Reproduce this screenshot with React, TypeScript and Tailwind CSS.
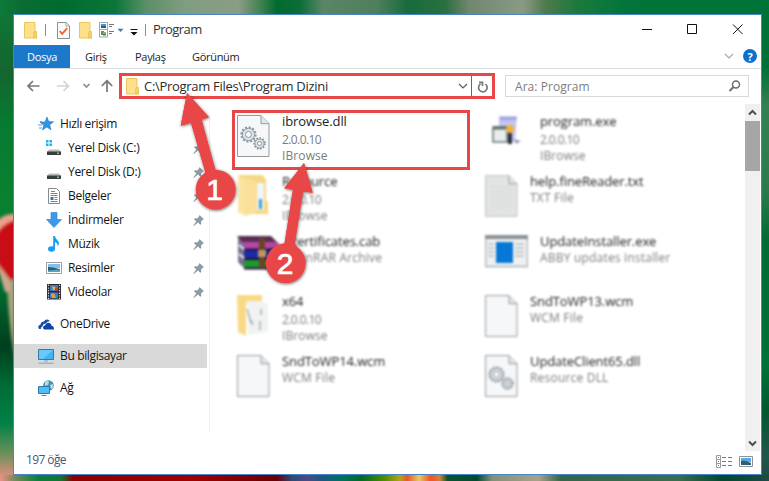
import type { ReactNode } from 'react';

const RED = '#e94747';

function Wallpaper() {
  return (
    <svg className="absolute inset-0" width="769" height="481" viewBox="0 0 769 481">
      <defs>
        <linearGradient id="top" x1="0" x2="769" y1="0" y2="0" gradientUnits="userSpaceOnUse">
          <stop offset="0" stopColor="#0d7a38" />
          <stop offset=".03" stopColor="#0a6c33" />
          <stop offset=".08" stopColor="#006b2e" />
          <stop offset=".15" stopColor="#0b7638" />
          <stop offset=".19" stopColor="#5b8f67" />
          <stop offset=".24" stopColor="#7f9d80" />
          <stop offset=".31" stopColor="#8a9d86" />
          <stop offset=".34" stopColor="#3f8050" />
          <stop offset=".36" stopColor="#006b30" />
          <stop offset=".39" stopColor="#0c6d37" />
          <stop offset=".42" stopColor="#5a8566" />
          <stop offset=".49" stopColor="#4f7f5d" />
          <stop offset=".53" stopColor="#176b3c" />
          <stop offset=".58" stopColor="#2c7040" />
          <stop offset=".61" stopColor="#71876f" />
          <stop offset=".68" stopColor="#8a9a84" />
          <stop offset=".71" stopColor="#4e7a4c" />
          <stop offset=".75" stopColor="#1a7a3c" />
          <stop offset=".82" stopColor="#00743a" />
          <stop offset="1" stopColor="#007338" />
        </linearGradient>
        <linearGradient id="right" x1="0" x2="0" y1="0" y2="481" gradientUnits="userSpaceOnUse">
          <stop offset="0" stopColor="#007338" />
          <stop offset=".14" stopColor="#007036" />
          <stop offset=".22" stopColor="#348055" />
          <stop offset=".4" stopColor="#2b7a4c" />
          <stop offset=".5" stopColor="#006b34" />
          <stop offset=".76" stopColor="#007236" />
          <stop offset=".85" stopColor="#00592f" />
          <stop offset=".95" stopColor="#21564a" />
          <stop offset="1" stopColor="#1f4a44" />
        </linearGradient>
        <linearGradient id="left" x1="0" x2="0" y1="0" y2="481" gradientUnits="userSpaceOnUse">
          <stop offset="0" stopColor="#0d7a38" />
          <stop offset=".15" stopColor="#14652f" />
          <stop offset=".25" stopColor="#077a31" />
          <stop offset=".42" stopColor="#0a8130" />
          <stop offset=".6" stopColor="#006b30" />
          <stop offset=".72" stopColor="#003f1e" />
          <stop offset=".8" stopColor="#006b35" />
          <stop offset=".88" stopColor="#008247" />
          <stop offset=".94" stopColor="#668f5a" />
          <stop offset="1" stopColor="#f08f83" />
        </linearGradient>
        <linearGradient id="bottom" x1="0" x2="769" y1="0" y2="0" gradientUnits="userSpaceOnUse">
          <stop offset="0" stopColor="#ee8f86" />
          <stop offset=".02" stopColor="#6f8c55" />
          <stop offset=".05" stopColor="#08803f" />
          <stop offset=".08" stopColor="#147237" />
          <stop offset=".095" stopColor="#8b0000" />
          <stop offset=".25" stopColor="#a00000" />
          <stop offset=".36" stopColor="#660008" />
          <stop offset=".38" stopColor="#2f4a76" />
          <stop offset=".4" stopColor="#4d4a85" />
          <stop offset=".42" stopColor="#175a80" />
          <stop offset=".445" stopColor="#007060" />
          <stop offset=".47" stopColor="#006a27" />
          <stop offset=".5" stopColor="#4d8d00" />
          <stop offset=".52" stopColor="#b1a516" />
          <stop offset=".53" stopColor="#ed5724" />
          <stop offset=".545" stopColor="#e2cc62" />
          <stop offset=".56" stopColor="#f35125" />
          <stop offset=".572" stopColor="#d18230" />
          <stop offset=".582" stopColor="#075432" />
          <stop offset=".62" stopColor="#004a34" />
          <stop offset=".64" stopColor="#83917a" />
          <stop offset=".7" stopColor="#a6a28a" />
          <stop offset=".73" stopColor="#32664a" />
          <stop offset=".88" stopColor="#386f50" />
          <stop offset=".94" stopColor="#004832" />
          <stop offset="1" stopColor="#1f4a44" />
        </linearGradient>
        <filter id="soft"><feGaussianBlur stdDeviation="1.5" /></filter>
      </defs>
      <rect width="769" height="481" fill="url(#left)" />
      <g filter="url(#soft)">
        <path d="M6 270h9v90q-6-30-9-90z" fill="#a9a27a" />
        <path d="M-4 228Q4 217 18 216v62l-9 3-13-10z" fill="#c90a12" />
        <path d="M-4 262l8 10 6 8v12H5z" fill="#c9a990" />
        <path d="M-4 222q8-9 19-8v6Q5 222-4 234z" fill="#e9a08a" />
      </g>
      <rect width="769" height="15" fill="url(#top)" />
      <rect x="755" width="14" height="481" fill="url(#right)" />
      <rect y="475" width="769" height="6" fill="url(#bottom)" />
    </svg>
  );
}

function Folder() {
  return (
    <svg width="13" height="17" viewBox="0 0 13 17" className="shrink-0">
      <path d="M.5.5h10.500v12h1.500v3.500H.5z" fill="#fde08a" stroke="#ecc65c" />
      <path d="M9.6 10.5q0-1 1-1h1.9V16H9.6z" fill="#f6d069" stroke="#e8bd4b" strokeWidth=".7" />
    </svg>
  );
}

function TitleBar() {
  return (
    <div className="flex h-[30px] shrink-0 items-center">
      <div className="ml-[10px] w-[13px]"><Folder /></div>
      <i className="ml-2 h-3 w-px bg-[#8c8c8c]" />
      <svg className="ml-[11px]" width="13" height="17" viewBox="0 0 13 17">
        <path d="M.5.5h8.6l3.4 3.4v12.6H.5z" fill="#fafafa" stroke="#8b8f92" />
        <path d="M8.9.6v3.5h3.5" fill="none" stroke="#a9adb0" />
        <path d="M2.700 9l2.500 2.800 5-5.600" fill="none" stroke="#e9632b" strokeWidth="1.800" />
      </svg>
      <div className="ml-[9px] w-[13px]"><Folder /></div>
      <svg className="ml-[7px]" width="16" height="16" viewBox="0 0 16 16">
        <path d="M.5.500h8v14.500h-8zM.5 7.500h8" fill="#fff" stroke="#a2a7ab" />
        <path d="M2 2h5v2H2z" fill="#3c95e8" /><path d="M2 4h5v2H2z" fill="#2e5d66" />
        <path d="M2 9h3v4H2z" fill="#469a55" /><path d="M4 10h3v2H4z" fill="#e98f3a" /><path d="M4 12h3v1.500H4z" fill="#376fc4" />
        <path d="M10 2.500h5M10 4.500h3M10 9.500h5M10 11.500h3" stroke="#77797b" />
      </svg>
      <svg className="ml-[2px]" width="7" height="5" viewBox="0 0 7 5"><path d="M.5.800h6L3.500 4z" fill="#3f75c1" /></svg>
      <svg className="ml-[6px] mt-[4px]" width="8" height="8" viewBox="0 0 8 8"><path d="M.5 1.500h7" stroke="#111" /><path d="M.5 4h7L4 7.500z" fill="#111" /></svg>
      <i className="ml-[7px] h-3 w-px bg-[#8c8c8c]" />
      <span className="ml-[7px] w-[60px] text-[13px] tracking-[-0.55px] text-[#333]">Program</span>
      <svg className="ml-auto mr-[17px]" width="103" height="12" viewBox="0 0 103 12" fill="none" stroke="#111">
        <path d="M1 5.500h10M46.500.500h9v9h-9zM92 .500l9.500 9.500M101.500.500L92 10" />
      </svg>
    </div>
  );
}

function Ribbon() {
  return (
    <div className="flex h-[24px] shrink-0 border-b border-[#d9dadb] text-[11px] leading-[23px] tracking-[-0.3px] text-[#222]">
      <span className="w-[56px] bg-[#1b78cb] text-center text-white">Dosya</span>
      <span className="ml-[15px] w-[50px]">Giriş</span>
      <span className="w-[57px]">Paylaş</span>
      <span>Görünüm</span>
      <svg className="ml-auto mt-[8px]" width="10" height="7" viewBox="0 0 10 7"><path d="M1 1l4 4 4-4" fill="none" stroke="#a7a7a7" strokeWidth="1.200" /></svg>
      <div className="ml-[9px] mr-[4px] mt-[4px] flex h-[14px] w-[14px] items-center justify-center rounded-full bg-[#0d70cf] text-[11px] font-bold leading-none text-white">?</div>
    </div>
  );
}

function AddressRow() {
  return (
    <div className="flex h-[34px] shrink-0 pt-[4px]">
      <svg className="mt-[5px] shrink-0" width="105" height="16" viewBox="0 0 105 16" fill="none" stroke="#777" strokeWidth="1.700">
        <path d="M25.500 8H14M19 3l-5 5 5 5" />
        <path d="M43 8h11.500M49.500 3l5 5-5 5" stroke="#d4d4d4" />
        <path d="M69.500 6l3 3 3-3" stroke="#8b8b8b" />
        <path d="M93 14V3M87.800 8L93 2.800 98.200 8" />
      </svg>
      <div className="flex h-[26px] w-[376px] shrink-0 items-center border-[3px] border-[#e94747]">
        <div className="ml-[4px] w-[13px]"><Folder /></div>
        <span className="ml-[5px] mt-px flex-1 whitespace-nowrap text-[13px] tracking-[-0.3px] text-[#2b2b2b]">C:\Program Files\Program Dizini</span>
        <svg className="mt-px" width="10" height="7" viewBox="0 0 10 7"><path d="M1 1l4 4 4-4" fill="none" stroke="#5d5d5d" strokeWidth="1.200" /></svg>
        <i className="ml-[3px] h-full w-px bg-[#2179c4]" />
        <svg className="ml-[5px] mr-[3px] mt-px" width="12" height="12" viewBox="0 0 12 12" fill="none" stroke="#777" strokeWidth="1.700">
          <path d="M3.500 2.900A4.300 4.300 0 1 0 8.500 3.100M2 1.300h3.500v3.700" />
        </svg>
      </div>
      <div className="ml-[10px] mt-[2px] flex h-[22px] w-[244px] shrink-0 items-center border border-[#d9d9d9]">
        <span className="ml-[9px] mt-px text-[12px] tracking-[0.05px] text-[#7d7d7d]">Ara: Program</span>
        <svg className="ml-auto mr-[7px]" width="13" height="12" viewBox="0 0 13 12" fill="none" stroke="#6c6c6c">
          <circle cx="8" cy="4.500" r="3.500" strokeWidth="1.500" /><path d="M5.500 7L1.500 11" strokeWidth="2" />
        </svg>
      </div>
    </div>
  );
}

const drive = (
  <>
    <path d="M3 9.500h10l2 2.500H1z" fill="#b9bcbe" />
    <path d="M1 11.500h14V15H1z" fill="#3a3d3f" /><path d="M11 12.500h2V14h-2z" fill="#56e04e" />
  </>
);

const navIcons: Record<string, ReactNode> = {
  star: (
    <>
      <path d="M9 1l1.700 4.600 4.800.200-3.800 3 1.300 5-4.300-2.800L4.500 14l1.300-4.800L2 6.200l5-.200z" fill="#2f94e3" stroke="#1c7bc9" strokeWidth=".6" />
      <path d="M0 9h4M1 12h3M2 5.500h2" stroke="#4fa5e6" />
    </>
  ),
  win: (
    <>
      <path d="M0 0h2.500v2.500H0zM3.500 0H6v2.500H3.500zM0 3.500h2.500V6H0zM3.500 3.500H6V6H3.500z" fill="#19b1ee" />
      {drive}
    </>
  ),
  disk: drive,
  doc: (
    <>
      <path d="M2.500.500h8l3 3v12h-11z" fill="#fff" stroke="#84898d" />
      <path d="M5 3.500h4M4.500 5.500h7M4.500 7.500h7M8.500 9.500h3M8.500 11.500h3M4.500 13.500h7" stroke="#4b8fc7" /><path d="M4.500 9h3v3h-3z" fill="#2a76b8" />
    </>
  ),
  down: <path d="M5 .500h6v7h4.500L8 15.500.500 7.500H5z" fill="#3c98e8" stroke="#2a80cc" strokeWidth=".6" />,
  music: (
    <>
      <ellipse cx="5.500" cy="13" rx="3.500" ry="2.800" fill="#169cf0" />
      <path d="M7.200 0H9q.3 2.500 2.400 4.200Q14.500 7 11.500 10.500q.6-3.500-2.500-4.500v7H7.200z" fill="#169cf0" />
    </>
  ),
  pic: (
    <>
      <path d="M.5 2.500h15v11H.5z" fill="#fff" stroke="#9b9fa2" />
      <path d="M2 4h12v4H2z" fill="#83bfee" /><path d="M2 7q4 0 12 2v3H2z" fill="#2e5f6d" /><path d="M2 10.500l12-1V12H2z" fill="#5b9fcb" />
    </>
  ),
  film: (
    <>
      <path d="M1 0h14v15.500H1z" fill="#2b2b2b" /><path d="M4 1h8v6H4zM4 8.500h8v6H4z" fill="#3e79cf" />
      <path d="M6 2l3 1 2 3H7z" fill="#e8b429" /><path d="M5 10l3-1 2 5H6z" fill="#d8a52d" /><path d="M9 4h3v3H9z" fill="#b5443b" />
      <path d="M2.500.800V15M13.500.800V15" stroke="#ddd" strokeWidth="1.200" strokeDasharray="1.300 1.300" />
    </>
  ),
  cloud: (
    <>
      <path d="M1 13Q-1 9.500 2.500 8.500 3 5.500 6 5.500 8 2 12 5 9 5 8 7.500q-3 0-3.500 3Q2.500 11 3 13z" fill="#1650a8" />
      <path d="M6 13.500q-2.500-2.500 1-4.200Q8.500 6 11.500 7q2 .500 2 2.800Q16 10 16 13.500z" fill="#0c46a5" />
    </>
  ),
  pc: (
    <>
      <path d="M.5 1.500h15v10H.5z" fill="#40b4f5" stroke="#3478a8" /><path d="M1 2h14L5 11H1z" fill="#69c8fb" />
      <path d="M6 13h4" stroke="#7fa3bb" /><path d="M.500 15.200h15" stroke="#6faacd" />
    </>
  ),
  net: (
    <>
      <circle cx="10.500" cy="5.500" r="5.300" fill="#4b8fae" /><path d="M7 2q3-2 4 0l-1 3-3 1zM12 5l3-1v4l-2 1z" fill="#b8dbe6" />
      <path d="M.5 6.500h11v7H.5z" fill="#50bdf8" stroke="#2c78ac" /><path d="M3.500 15.500h5" stroke="#4a8eb8" />
    </>
  ),
};

function NavRow({ icon, label, child, pin, active }: { icon: string; label: string; child?: boolean; pin?: boolean; active?: boolean }) {
  return (
    <div className={`flex h-6 w-[193px] shrink-0 items-center ${active ? 'bg-[#d9d9d9]' : ''} ${child ? 'pl-8' : 'pl-6'}`}>
      <svg width="16" height="16" viewBox="0 0 16 16" className="shrink-0">{navIcons[icon]}</svg>
      <span className={`whitespace-nowrap text-[12px] text-[#151515] ${child ? 'ml-[6px] tracking-[-0.3px]' : 'ml-[6px] tracking-[-0.35px]'}`}>{label}</span>
      {pin && (
        <svg className="ml-auto mr-[3px]" width="11" height="11" viewBox="0 0 11 11">
          <path d="M6.500 0L11 4.200 9.700 4.700 8 6.800l.300 2.200-1 .8-2.300-2.200L.8 11l-.500-.5 3-4L1 4.200l.9-1 2.300.200L6 1.600z" fill="#8e9ba4" />
        </svg>
      )}
    </div>
  );
}

function Sidebar() {
  return (
    <div className="flex w-[195px] shrink-0 flex-col pt-[9px]">
      <NavRow icon="star" label="Hızlı erişim" />
      <NavRow icon="win" label="Yerel Disk (C:)" child pin />
      <NavRow icon="disk" label="Yerel Disk (D:)" child pin />
      <NavRow icon="doc" label="Belgeler" child pin />
      <NavRow icon="down" label="İndirmeler" child pin />
      <NavRow icon="music" label="Müzik" child pin />
      <NavRow icon="pic" label="Resimler" child pin />
      <NavRow icon="film" label="Videolar" child pin />
      <div className="h-2 shrink-0" />
      <NavRow icon="cloud" label="OneDrive" />
      <div className="h-2 shrink-0" />
      <NavRow icon="pc" label="Bu bilgisayar" active />
      <div className="h-2 shrink-0" />
      <NavRow icon="net" label="Ağ" />
    </div>
  );
}

function Page({ gears, gray }: { gears?: boolean; gray?: boolean }) {
  return (
    <svg width="33" height="43" viewBox="0 0 33 43">
      <path d="M.5.500h23.500l8 8V41.500H.500z" fill={gray ? '#e2e3e3' : '#f5f7f9'} stroke={gray ? '#c2c4c5' : '#979b9e'} />
      <path d="M24 .700v8h8" fill="#e3e6e8" stroke="#979b9e" />
      {gray && <path d="M5 12h22M5 16h22M5 20h22M5 24h22M5 28h22M5 32h22" stroke="#d8dadb" />}
      {gears && (
        <g fill="#dde3e7" stroke="#8c989f">
          <circle cx="11.500" cy="19.500" r="7" strokeWidth="2.200" strokeDasharray="2 1.660" fill="none" />
          <circle cx="11.500" cy="19.500" r="6.200" /><circle cx="11.500" cy="19.500" r="3" fill="#f8fafb" />
          <circle cx="22.500" cy="28.500" r="5.300" strokeWidth="2" strokeDasharray="1.600 1.430" fill="none" />
          <circle cx="22.500" cy="28.500" r="4.600" /><circle cx="22.500" cy="28.500" r="2" fill="#f8fafb" />
        </g>
      )}
    </svg>
  );
}

const fileIcons: Record<string, ReactNode> = {
  dll: <Page gears />,
  page: <Page />,
  txt: <Page gray />,
  folder: (
    <svg width="33" height="43" viewBox="0 0 33 43">
      <path d="M1 0h24l4 4v35H4z" fill="#f6d783" /><path d="M1 0l8 5v36l-8-4z" fill="#fbe3a0" />
      <path d="M20 8h7v27h-7z" fill="#f1f6f8" /><path d="M22 24h3v10h-3z" fill="#3e9fd4" /><path d="M27 26h4v13h-4z" fill="#f7d77f" /><path d="M8 3l11 3v32l-11 3z" fill="#fae09a" />
    </svg>
  ),
  open: (
    <svg width="33" height="43" viewBox="0 0 33 43">
      <path d="M0 0h25v8H9v33l-8-4z" fill="#fad985" /><path d="M10 6h14l7 3v28l-20 3z" fill="#f1f2f2" />
      <path d="M10 14l4 14M14 25l2 5M24 14v6M23 26v9" stroke="#a2b2b8" strokeWidth="1.500" />
    </svg>
  ),
  rar: (
    <svg width="43" height="35" viewBox="0 0 43 35">
      <path d="M0 1h34l9 9H7z" fill="#5a2c54" /><path d="M5 7h36v8H7L1 4z" fill="#b547a7" />
      <path d="M5 15h37v9H8l-6-7z" fill="#1d2aa8" /><path d="M6 24h36v9H8l-6-5z" fill="#1c9a2e" />
      <path d="M1 2l6 8v23l-6-6z" fill="#7a6f94" /><path d="M2 10l6 5M2 19l6 5" stroke="#eee" strokeWidth="2" />
      <path d="M7 14.500h35M7 24h35M7 33.500h35" stroke="#22143a" strokeWidth="1.800" />
      <path d="M22 3h6v30h-6z" fill="#6b4328" /><path d="M21 15h8v7h-8z" fill="#b99b62" />
    </svg>
  ),
  setup: (
    <svg width="32" height="32" viewBox="0 0 32 32">
      <path d="M8 1h18l-2 26H8z" fill="#c5c6ee" /><path d="M9 2h17l-1 3H9z" fill="#a3a4e6" />
      <path d="M2 12h14v15H2z" fill="#e8ecea" stroke="#6b757b" strokeWidth="1.500" /><path d="M2 11.500h14v3H2z" fill="#5d7068" />
      <circle cx="19" cy="14" r="4" fill="#f2b13c" /><path d="M17 18h4v11h-4z" fill="#2c3340" /><path d="M23 24l7 2-5 3z" fill="#9a9cc0" />
    </svg>
  ),
  app: (
    <svg width="43" height="33" viewBox="0 0 43 33">
      <path d="M.5.500h42v31H.500z" fill="#eef0f1" stroke="#aeb2b5" strokeWidth="1.500" /><path d="M0 0h43v4H0z" fill="#8c9195" />
      <path d="M11 7h17v21H11z" fill="#0878d8" /><path d="M3 9h6M3 13h6M3 17h6M3 21h6M30 9h9M30 13h9M30 17h9M30 21h9" stroke="#b9bdc0" strokeWidth="1.500" />
    </svg>
  ),
};

type FileItem = { icon: string; name: string; lines: string[]; pad: string };

const files: FileItem[] = [
  { icon: 'dll', name: 'ibrowse.dll', lines: ['2.0.0.10', 'IBrowse'], pad: 'w-[45px]' },
  { icon: 'setup', name: 'program.exe', lines: ['2.0.0.10', 'IBrowse'], pad: 'w-[55px] pl-[6px]' },
  { icon: 'folder', name: 'Resource', lines: ['2.0.0.10', 'IBrowse'], pad: 'w-[45px]' },
  { icon: 'txt', name: 'help.fineReader.txt', lines: ['TXT File'], pad: 'w-[45px]' },
  { icon: 'rar', name: 'certificates.cab', lines: ['WinRAR Archive'], pad: 'w-[54px]' },
  { icon: 'app', name: 'UpdateInstaller.exe', lines: ['ABBY updates installer'], pad: 'w-[55px]' },
  { icon: 'open', name: 'x64', lines: ['2.0.0.10', 'IBrowse'], pad: 'w-[45px]' },
  { icon: 'page', name: 'SndToWP13.wcm', lines: ['WCM File'], pad: 'w-[45px]' },
  { icon: 'page', name: 'SndToWP14.wcm', lines: ['WCM File'], pad: 'w-[45px]' },
  { icon: 'dll', name: 'UpdateClient65.dll', lines: ['Resource DLL'], pad: 'w-[45px]' },
];

function FileTile({ item, selected }: { item: FileItem; selected: boolean }) {
  const wide = item.lines.length > 1;
  return (
    <div
      className={
        selected
          ? 'ml-[-5px] flex h-[60px] w-[238px] border-[3px] border-[#e94747] pl-[2px] pt-[2px]'
          : 'flex h-[60px] pt-[5px] blur-[1.3px]'
      }
    >
      <div className={`shrink-0 ${item.pad}`}>{fileIcons[item.icon]}</div>
      <div className="-mt-[2px] whitespace-nowrap text-[13px] leading-4 tracking-[-0.1px]">
        <div className="text-[#1d1d1d]">{item.name}</div>
        <div className={`text-[12px] text-[#7c7c7c] ${wide ? 'mt-[3px]' : 'mt-px'}`}>
          {item.lines.map((line) => (
            <div key={line} className={line === '2.0.0.10' ? 'tracking-[-0.6px]' : line === 'IBrowse' ? 'tracking-[0.1px]' : 'tracking-[0.2px]'}>{line}</div>
          ))}
        </div>
      </div>
    </div>
  );
}

function Scrollbar() {
  return (
    <div className="mr-px mt-px flex w-[15px] shrink-0 flex-col items-center bg-[#f0f0f0]">
      <svg className="my-[5px] shrink-0" width="9" height="7" viewBox="0 0 9 7"><path d="M1 5.500l3.500-3.500L8 5.500" fill="none" stroke="#505050" strokeWidth="2" /></svg>
      <div className="h-[50px] w-full bg-[#a6a6a6]" />
      <svg className="mb-[4px] mt-auto shrink-0" width="9" height="7" viewBox="0 0 9 7"><path d="M1 1.500L4.500 5 8 1.500" fill="none" stroke="#505050" strokeWidth="2" /></svg>
    </div>
  );
}

function StatusBar() {
  return (
    <div className="flex h-[23px] shrink-0 items-center">
      <span className="ml-[12px] mt-[-5px] text-[12px] tracking-[-0.6px] text-[#41587a]">197 öğe</span>
      <svg className="ml-auto mr-[7px] mt-[-2px]" width="38" height="13" viewBox="0 0 38 13">
        <path d="M.5.500h4v12h-4zM.5 4.500h4M.5 8.500h4" fill="none" stroke="#999" />
        <path d="M6 2.500h4M12 2.500h4M6 6.500h4M12 6.500h4M6 10.500h4M12 10.500h4" stroke="#777" />
        <path d="M2 2h1v1H2z" fill="#49a45d" /><path d="M2 6h1v1H2z" fill="#3b7fd0" /><path d="M2 10h1v1H2z" fill="#d43a55" />
        <path d="M23.500 1.500h13v10h-13z" fill="#fff" stroke="#8e9295" />
        <path d="M25 3h10v4H25z" fill="#5aa7eb" /><path d="M25 6q4-1 10 2v2H25z" fill="#2d5e71" />
      </svg>
    </div>
  );
}

function Callouts() {
  return (
    <svg className="absolute inset-0" width="769" height="481" viewBox="0 0 769 481">
      <defs>
        <filter id="shadow" x="-30%" y="-30%" width="160%" height="160%">
          <feDropShadow dx="0.500" dy="0.800" stdDeviation="1.700" floodColor="#000" floodOpacity=".6" />
        </filter>
      </defs>
      <g fill={RED}>
        <g filter="url(#shadow)">
          <path d="M187 93L209 117.300 201.500 119.600 217 176 207 178 191 122.700 180.700 125.700z" />
          <path d="M304 163L312.700 192.700 303 191.500 294 248 284 247 293 189.700 284.300 188.300z" />
        </g>
        <g filter="url(#shadow)">
          <circle cx="215.700" cy="189.700" r="20" />
          <circle cx="285.700" cy="263.300" r="20" />
        </g>
        <path d="M187 93L209 117.300 201.500 119.600 217 176 207 178 191 122.700 180.700 125.700zM304 163L312.700 192.700 303 191.500 294 248 284 247 293 189.700 284.300 188.300z" />
      </g>
      <g className="font-['Liberation_Sans',Arial,sans-serif] text-[30px]" fill="#fff" stroke="#fff" strokeWidth=".7" textAnchor="middle">
        <text x="214.500" y="200">1</text>
        <text x="285.200" y="273.500">2</text>
      </g>
    </svg>
  );
}

export default function App() {
  return (
    <div className="relative h-[481px] w-[769px] overflow-hidden pl-[13px] pt-[14px] font-['Open_Sans','Noto_Sans',sans-serif]">
      <Wallpaper />
      <div className="relative flex h-[461px] w-[749px] flex-col border border-[#4a83c6] bg-white">
        <TitleBar />
        <Ribbon />
        <AddressRow />
        <div className="flex min-h-0 flex-1">
          <Sidebar />
          <div className="mb-[18px] mt-[15px] w-px bg-[#f0f0f0]" />
          <div className="grid flex-1 auto-rows-[60px] grid-cols-[248px_1fr] content-start pl-[27px] pt-[7px]">
            {files.map((item, i) => <FileTile key={item.name} item={item} selected={i === 0} />)}
          </div>
          <Scrollbar />
        </div>
        <StatusBar />
      </div>
      <Callouts />
    </div>
  );
}
